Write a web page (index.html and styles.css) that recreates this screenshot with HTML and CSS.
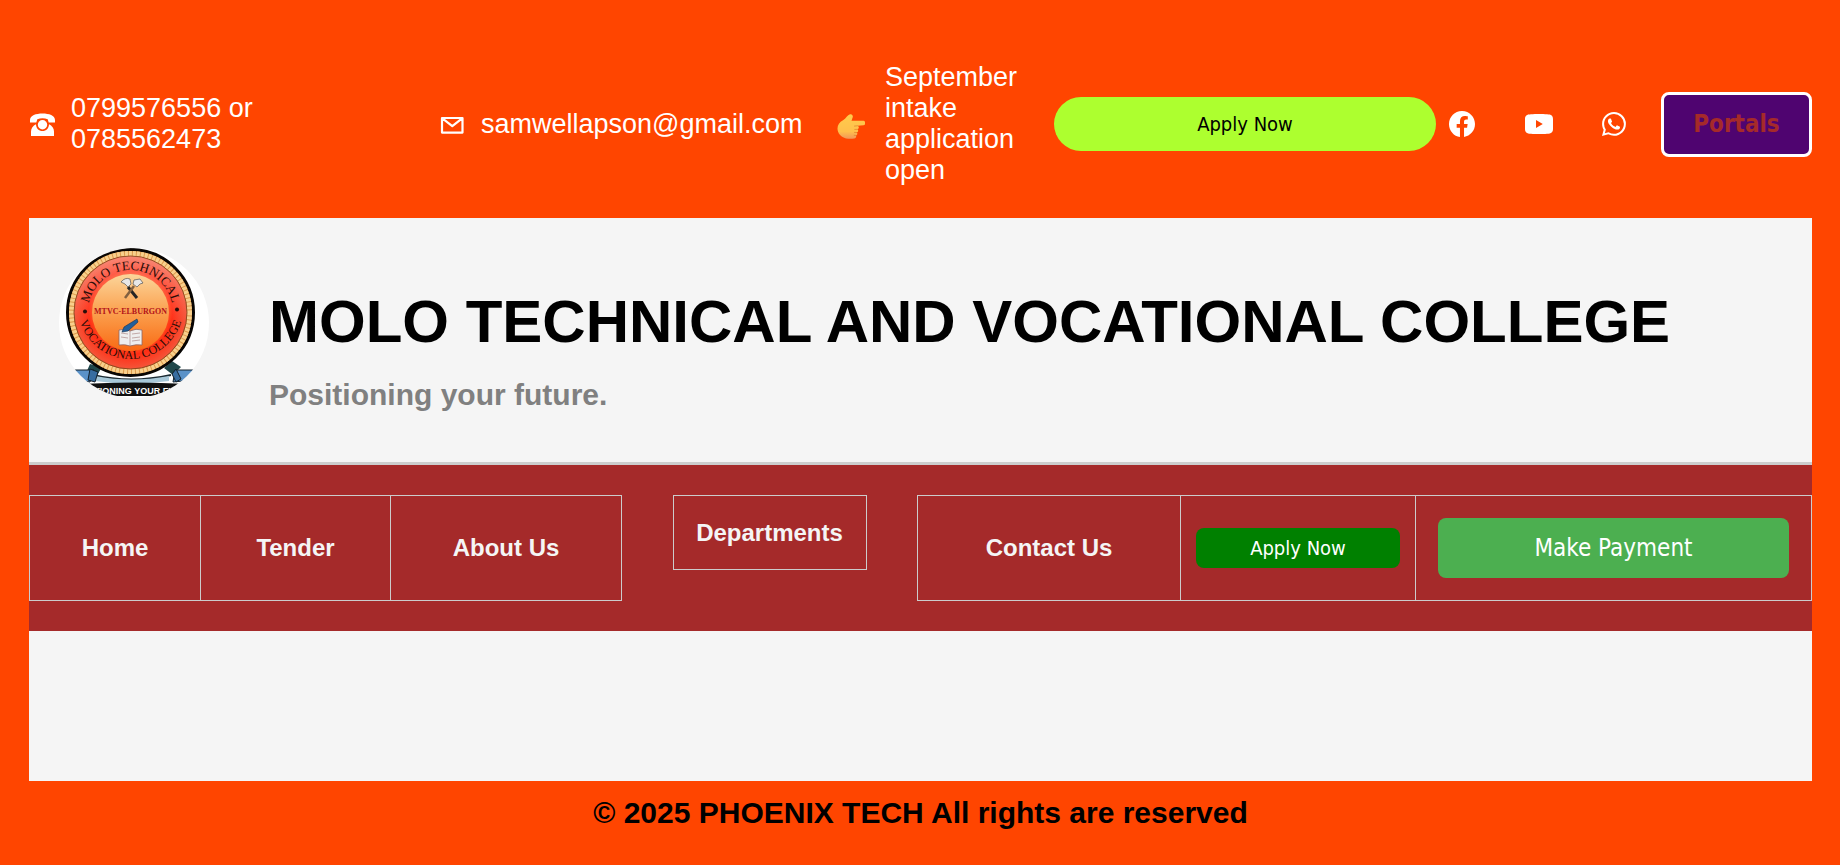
FILE: index.html
```html
<!DOCTYPE html>
<html lang="en">
<head>
<meta charset="utf-8">
<meta name="viewport" content="width=device-width, initial-scale=1">
<title>Molo Technical and Vocational College</title>
<link rel="stylesheet" href="styles.css">
</head>
<body>
<div class="topbar">
  <a class="contact" href="tel:0799576556">
    <svg class="contact-icon" viewBox="0 0 26 32" aria-hidden="true">
      <path fill="#fff" d="M1 14.500V12C1 7.500 7 5.500 13.500 5.500S26 7.500 26 12v2.500h-6.300l-1-3.200c-3.300-1.300-7.100-1.300-10.400 0l-1 3.200z"/>
      <path fill="#fff" d="M2 28v-4.500c0-3.500 2-5.800 5-7.300.1 4 2.800 6.800 6.500 6.800s6.400-2.800 6.500-6.800c3 1.500 5 3.800 5 7.300V28z"/>
      <circle cx="13.500" cy="16.700" r="4.700" fill="#fff"/>
    </svg>
    <span>0799576556 or<br>0785562473</span>
  </a>
  <a class="contact" href="mailto:samwellapson@gmail.com">
    <svg class="contact-icon" viewBox="0 0 26 32" aria-hidden="true">
      <path fill="none" stroke="#fff" stroke-width="2.200" stroke-linejoin="round" d="M2 10h20.500v14.600H2zM3 10.900l9.300 7.200 9.200-7.200"/>
    </svg>
    <span>samwellapson@gmail.com</span>
  </a>
  <div class="contact">
    <svg class="contact-icon" viewBox="0 0 28 32" aria-hidden="true">
      <defs>
        <linearGradient id="skin" x1="0" y1="0" x2="0" y2="1">
          <stop offset="0" stop-color="#ffcb4c"/><stop offset=".7" stop-color="#ffc04c"/><stop offset="1" stop-color="#f1955a"/>
        </linearGradient>
      </defs>
      <path fill="url(#skin)" d="M13 6.300c1.900-.6 3.300 1.300 2.700 2.900L14.500 12.800H26.500c2.200 0 2.400 4.300 0 4.500l-6 .5c1.800.7 1.700 3-.1 3.500 1.300.8 1 3-.7 3.200 1.200 1 .7 2.700-.8 3 .7 1.300 0 2.900-1.600 3.100-2.500.3-5.400.4-8.300-.2C4 29.300.500 25.300.500 20.600c0-4 2-6.400 5.500-8.400 3-1.700 4.500-5.100 7-5.900z"/>
      <path fill="none" stroke="#e0852e" stroke-width=".8" stroke-linecap="round" d="M20.500 17.800l-3 .3M20.300 21.300l-2.500.1M19.600 24.500l-2.100-.1M18.900 27.500l-1.700-.2"/>
    </svg>
    <span>September intake application open</span>
  </div>
  <button class="apply-top" type="button">Apply Now</button>
  <div class="social">
    <a href="#facebook" aria-label="Facebook"><svg viewBox="0 0 16 16"><path d="M16 8.049c0-4.446-3.582-8.050-8-8.050C3.580 0-.002 3.603-.002 8.050c0 4.017 2.926 7.347 6.750 7.951v-5.625h-2.030V8.050H6.750V6.275c0-2.017 1.195-3.131 3.022-3.131.876 0 1.791.157 1.791.157v1.980h-1.009c-.993 0-1.303.621-1.303 1.258v1.510h2.218l-.354 2.326H9.250V16c3.824-.604 6.750-3.934 6.750-7.951"/></svg></a>
    <a class="youtube" href="#youtube" aria-label="YouTube"><svg viewBox="0 0 28 26"><path fill-rule="evenodd" d="M6 3.300C10.500 2.900 17.500 2.900 22 3.300c4.500.2 6 1.400 6 5v9.400c0 3.600-1.500 4.800-6 5-4.500.4-11.500.4-16 0-4.500-.2-6-1.400-6-5V8.300c0-3.600 1.500-4.800 6-5zM11 9v8l6.800-4z"/></svg></a>
    <a href="#whatsapp" aria-label="WhatsApp"><svg class="whatsapp" viewBox="0 0 16 16"><path d="M13.601 2.326A7.850 7.850 0 0 0 7.994 0C3.627 0 .068 3.558.064 7.926c0 1.399.366 2.760 1.057 3.965L0 16l4.204-1.102a7.900 7.900 0 0 0 3.790.965h.004c4.368 0 7.926-3.558 7.930-7.930A7.900 7.900 0 0 0 13.600 2.326zM7.994 14.521a6.600 6.600 0 0 1-3.356-.920l-.240-.144-2.494.654.666-2.433-.156-.251a6.560 6.560 0 0 1-1.007-3.505c0-3.626 2.957-6.584 6.591-6.584a6.560 6.560 0 0 1 4.660 1.931 6.560 6.560 0 0 1 1.928 4.660c-.004 3.639-2.961 6.592-6.592 6.592m3.615-4.934c-.197-.099-1.170-.578-1.353-.646-.182-.065-.315-.099-.445.099-.133.197-.513.646-.627.775-.114.133-.232.148-.430.050-.197-.100-.836-.308-1.592-.985-.590-.525-.985-1.175-1.103-1.372-.114-.198-.011-.304.088-.403.087-.088.197-.232.296-.346.100-.114.133-.198.198-.330.065-.134.034-.248-.015-.347-.050-.099-.445-1.076-.612-1.470-.160-.389-.323-.335-.445-.340-.114-.007-.247-.007-.380-.007a.730.730 0 0 0-.529.247c-.182.198-.691.677-.691 1.654s.710 1.916.810 2.049c.098.133 1.394 2.132 3.383 2.992.470.205.840.326 1.129.418.475.152.904.129 1.246.080.380-.058 1.171-.480 1.338-.943.164-.464.164-.860.114-.943-.049-.084-.182-.133-.380-.232"/></svg></a>
  </div>
  <button class="portals" type="button">Portals</button>
</div>

<div class="page">
  <header class="masthead">
    <svg class="logo" viewBox="0 0 150 150" role="img" aria-label="Molo Technical Vocational College crest">
      <defs>
        <clipPath id="round"><circle cx="75" cy="75" r="75"/></clipPath>
        <radialGradient id="ring"><stop offset=".62" stop-color="#ff5a20"/><stop offset=".74" stop-color="#ff2d14"/><stop offset="1" stop-color="#f5553a"/></radialGradient>
        <linearGradient id="fade" x1="0" y1="0" x2="0" y2="1"><stop offset="0" stop-color="#fff" stop-opacity=".3"/><stop offset=".6" stop-color="#fff" stop-opacity="0"/></linearGradient>
        <linearGradient id="disc" x1="0" y1="0" x2="0" y2="1"><stop offset="0" stop-color="#fbd59a"/><stop offset=".5" stop-color="#fba04e"/><stop offset="1" stop-color="#f96a14"/></linearGradient>
        <path id="arc-top" d="M29.500 71A42.500 42.500 0 1 1 113.500 71"/>
        <path id="arc-bottom" d="M18.500 58A53 53 0 1 0 124.500 58"/>
      </defs>
      <g clip-path="url(#round)">
        <rect width="150" height="150" fill="#fff"/>
        <path fill="#20484b" d="M31 116l12 3-7 12-9-6zM113 113l9 6-8 8-9-7z"/>
        <path fill="none" stroke="#1c2b33" stroke-width="2" d="M34 127q38 9 78 0"/>
        <path fill="#a9c9d9" d="M36 128q36 7 74 0v5q-37 5-74 0z"/>
        <path fill="#5b92c8" stroke="#12202b" stroke-width="1" d="M13 122l22 0-4 12-18-2zM137 122l-21 0-2 12 20-2z"/>
        <path fill="#376da0" stroke="#12202b" stroke-width="1" d="M31 121l8 3-3 10-7-2zM117 121l-4 5 4 8 5-3z"/>
        <path fill="#111" d="M22 136q52-3 108 0v12H22z"/>
        <circle cx="71.500" cy="64.500" r="63" fill="#dd9a4d" stroke="#080503" stroke-width="3"/>
        <circle cx="71.500" cy="64.500" r="59" fill="none" stroke="#f8d08c" stroke-width="5" stroke-dasharray="3 1"/>
        <circle cx="71.500" cy="64.500" r="56.500" fill="url(#ring)" stroke="#8d4a20" stroke-width="1"/>
        <circle cx="71.500" cy="64.500" r="56" fill="url(#fade)"/>
        <circle cx="71.500" cy="64.500" r="38.500" fill="url(#disc)"/>
        <circle cx="26" cy="63.500" r="2" fill="#2a0d08"/><circle cx="118" cy="61.500" r="2" fill="#2a0d08"/>
        <text class="crest-arc"><textPath href="#arc-top" startOffset="50%" text-anchor="middle">MOLO TECHNICAL</textPath></text>
        <text class="crest-arc crest-low"><textPath href="#arc-bottom" startOffset="50%" text-anchor="middle">VOCATIONAL COLLEGE</textPath></text>
        <path fill="none" stroke="#252525" stroke-width="3" d="M69 39l9 11"/>
        <path fill="none" stroke="#826040" stroke-width="2.500" d="M75 38l-9 12"/>
        <path fill="#e7e7e7" stroke="#555" stroke-width=".7" d="M62 34q4-5 9-3l1 5-3 3-3-3zM75 32l6-1 3 4-3 1-3 3-4-3z"/>
        <text class="crest-name" x="71.500" y="66" text-anchor="middle">MTVC-ELBURGON</text>
        <path fill="#eee" stroke="#8d6663" stroke-width=".8" d="M60 82q6-2 11 1 6-3 12-1v15q-6-1-12 1-5-2-11-1z"/>
        <path fill="none" stroke="#a27b78" stroke-width=".6" d="M71 83v15M62 85l7 1M62 89l7 1M73 86l8-1M73 90l8-1M73 93l8-1"/>
        <path fill="#235f9c" stroke="#153250" stroke-width=".6" d="M63 84l2-5 13-8 1 3-10 9z"/>
        <text class="crest-motto" x="77" y="146" text-anchor="middle">POSITIONING YOUR FUTURE</text>
      </g>
    </svg>
    <div>
      <h1 class="title">MOLO TECHNICAL AND VOCATIONAL COLLEGE</h1>
      <p class="tagline">Positioning your future.</p>
    </div>
  </header>

  <nav class="nav">
    <a class="cell first" href="#home">Home</a>
    <a class="cell" href="#tender">Tender</a>
    <a class="cell" href="#about">About Us</a>
    <a class="cell departments" href="#departments">Departments</a>
    <a class="cell first" href="#contact">Contact Us</a>
    <div class="cell"><button class="apply-nav" type="button">Apply Now</button></div>
    <div class="cell wide"><button class="payment" type="button">Make Payment</button></div>
  </nav>
  <main class="content"></main>
</div>
<footer class="footer">© 2025 PHOENIX TECH All rights are reserved</footer>
</body>
</html>
```
FILE: styles.css
```css
* { box-sizing: border-box; }

body {
  margin: 0;
  padding: 0 28px 0 29px;
  background: #ff4500;
  font-family: "Liberation Sans", Arial, sans-serif;
}

button {
  border: 0;
  padding: 0;
  font-family: "DejaVu Sans Condensed", Tahoma, sans-serif;
  cursor: pointer;
}

a { color: inherit; text-decoration: none; }

/* Contact strip */
.topbar {
  display: grid;
  grid-template-columns: 411fr 397fr 217fr 382fr 225fr 151px;
  align-items: center;
  padding: 62px 0 32px;
  color: #fff;
  font-size: 27px;
  line-height: 31px;
}

.contact { display: flex; align-items: center; gap: 15px; }
.contact-icon { flex: none; width: 26px; height: 32px; }
.contact:first-child { gap: 16px; }
.contact:nth-child(3) { gap: 20px; padding-right: 24px; }
.contact:nth-child(3) .contact-icon { width: 28px; }

.apply-top {
  height: 54px;
  border-radius: 27px;
  background: #adff2f;
  color: #000;
  font-size: 20px;
}

.social {
  display: flex;
  align-items: center;
  justify-content: space-between;
  padding: 0 35px 0 13px;
}
.social a { display: flex; }
.social svg { width: 26px; height: 26px; fill: #fff; }
.social .youtube svg { width: 28px; }
.social .whatsapp { width: 24px; height: 24px; }

.portals {
  height: 65px;
  border: 3px solid #fff;
  border-radius: 8px;
  background: #4f0470;
  color: #a52a2a;
  font-size: 24px;
  font-weight: bold;
}

/* Page body */
.page { background: #f5f5f5; }

.masthead {
  display: flex;
  gap: 60px;
  padding: 30px 30px 50px;
  border-bottom: 3px solid #ccc;
}
.logo { flex: none; width: 150px; height: 150px; }
.title { margin: 40px 0 22px; font-size: 60px; line-height: 68px; }
.tagline { margin: 0; color: #808080; font-size: 30px; font-weight: bold; line-height: 34px; }

.crest-arc { font: 13px "Liberation Serif", serif; fill: #2a0d08; }
.crest-low { font-size: 12px; }
.crest-name { font: bold 8px "Liberation Serif", serif; fill: #b3121a; }
.crest-motto { font: bold 9px "Liberation Sans Narrow", "Liberation Sans", sans-serif; fill: #fff; }

.nav {
  display: grid;
  grid-template-columns: 172fr 190fr 231fr 295fr 264fr 235fr 396fr;
  align-items: start;
  padding: 30px 0;
  background: #a52a2a;
  color: #f5f5f5;
  font-size: 24px;
  font-weight: bold;
}
.cell {
  display: flex;
  align-items: center;
  justify-content: center;
  height: 106px;
  margin-left: -1px;
  padding: 0 15px;
  border: 1px solid #ccc;
}
.cell.first { margin-left: 0; }
.cell.departments { width: 194px; height: 75px; margin: 0; justify-self: center; }
.cell.wide { padding: 0 22px; }

.apply-nav, .payment { width: 100%; border-radius: 8px; color: #fff; }
.apply-nav { height: 40px; background: #008000; font-size: 20px; }
.payment { height: 60px; background: #4caf50; font-size: 24px; }

.content { min-height: 150px; }

.footer {
  padding: 15px 0 35px;
  font-size: 30px;
  font-weight: bold;
  line-height: 34px;
  text-align: center;
}
```
